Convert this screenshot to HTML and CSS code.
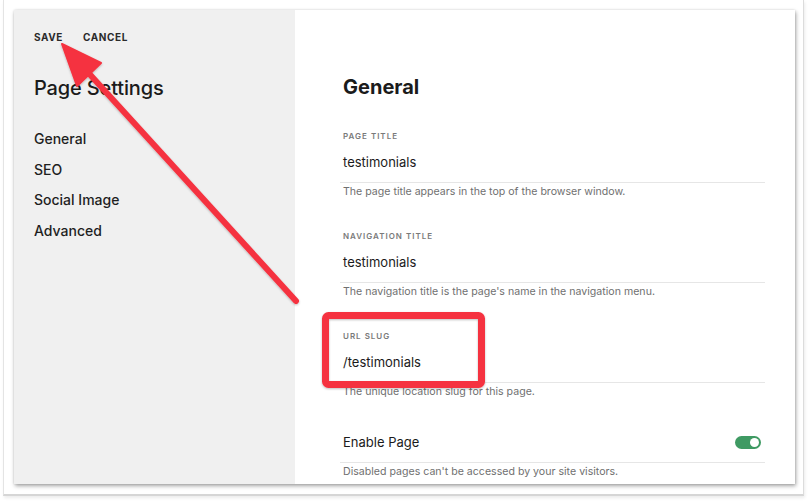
FILE: index.html
```html
<!DOCTYPE html>
<html lang="en">
<head>
<meta charset="utf-8">
<title>Page Settings</title>
<link rel="stylesheet" href="styles.css">
</head>
<body>
<div class="frame">
  <div class="dialog">
    <aside class="sidebar">
      <div class="actions">
        <span class="action">SAVE</span>
        <span class="action">CANCEL</span>
      </div>
      <h1 class="side-title">Page Settings</h1>
      <nav class="nav">
        <div class="nav-item">General</div>
        <div class="nav-item">SEO</div>
        <div class="nav-item">Social Image</div>
        <div class="nav-item">Advanced</div>
      </nav>
    </aside>
    <main class="main">
      <h2 class="main-title">General</h2>
      <div class="field">
        <div class="label">PAGE TITLE</div>
        <div class="value">testimonials</div>
        <div class="help">The page title appears in the top of the browser window.</div>
      </div>
      <div class="field">
        <div class="label">NAVIGATION TITLE</div>
        <div class="value">testimonials</div>
        <div class="help">The navigation title is the page's name in the navigation menu.</div>
      </div>
      <div class="field">
        <div class="label">URL SLUG</div>
        <div class="value">/testimonials</div>
        <div class="help">The unique location slug for this page.</div>
      </div>
      <div class="field toggle-field">
        <div class="value toggle-row">
          <span>Enable Page</span>
          <span class="toggle"><span class="knob"></span></span>
        </div>
        <div class="help">Disabled pages can't be accessed by your site visitors.</div>
      </div>
    </main>
  </div>
</div>
<svg class="annotation" width="808" height="502" viewBox="0 0 808 502" aria-hidden="true">
  <defs>
    <filter id="sh" x="-10%" y="-10%" width="120%" height="120%">
      <feDropShadow dx="0" dy="1" stdDeviation="1.2" flood-color="#000" flood-opacity="0.25"/>
    </filter>
  </defs>
  <g filter="url(#sh)" fill="#f5323f" stroke="#f5323f">
    <rect x="325.5" y="315.5" width="156" height="69" rx="3" fill="none" stroke-width="7"/>
    <line x1="84" y1="68" x2="296" y2="301" stroke-width="6" stroke-linecap="round"/>
    <polygon points="62,44 101,63 77,86" stroke-width="2" stroke-linejoin="round"/>
  </g>
</svg>
</body>
</html>
```
FILE: styles.css
```css
* { box-sizing: border-box; }
html, body { margin: 0; padding: 0; }
body {
  width: 808px;
  height: 502px;
  background: #ffffff;
  font-family: Inter, "Liberation Sans", Arial, sans-serif;
  color: #1b1b1b;
  overflow: hidden;
  position: relative;
}
.frame {
  margin-left: 3px;
  width: 801px;
  height: 496px;
  border-left: 1px solid #e4e4e4;
  border-right: 1px solid #dcdcdc;
  border-bottom: 2px solid #d6d6d6;
  padding: 10px 0 0 10px;
  box-shadow: 1px 2px 3px rgba(0,0,0,0.08);
}
.dialog {
  width: 781px;
  height: 474px;
  display: flex;
  background: #fff;
  box-shadow: 1px 2px 4px rgba(0,0,0,0.35), 0 0 2px rgba(0,0,0,0.12);
}
.sidebar {
  width: 281px;
  background: #f0f0f0;
  padding: 20px 0 0 20px;
}
.actions {
  display: flex;
  gap: 20px;
  height: 14px;
  line-height: 14px;
}
.action {
  font-size: 10px;
  font-weight: 700;
  letter-spacing: 0.6px;
  color: #2a2a2a;
}
.side-title {
  margin: 30px 0 0;
  font-size: 20px;
  line-height: 28px;
  font-weight: 500;
  color: #1b1b1b;
  letter-spacing: -0.15px;
}
.nav { margin-top: 22px; }
.nav-item {
  font-size: 14px;
  line-height: 30.5px;
  font-weight: 500;
  color: #1f1f1f;
}
.main {
  flex: 1;
  padding: 63px 30px 0 45px;
}
.main-title {
  margin: 0 0 29px 3px;
  font-size: 20px;
  line-height: 28px;
  font-weight: 700;
  color: #1b1b1b;
}
.field { margin-bottom: 31px; }
.label {
  padding-left: 3px;
  font-size: 8px;
  line-height: 12px;
  font-weight: 600;
  letter-spacing: 1px;
  color: #7a7a7a;
}
.value {
  margin-top: 10px;
  padding: 0 0 10px 3px;
  font-size: 13px;
  line-height: 20px;
  color: #1b1b1b;
  border-bottom: 1px solid #e6e6e6;
}
.help {
  padding: 1px 0 0 3px;
  font-size: 10.6px;
  line-height: 15px;
  color: #707070;
}
.toggle-field { margin-top: 33px; }
.toggle-field .value { margin-top: 0; }
.toggle-row {
  display: flex;
  align-items: center;
  justify-content: space-between;
  padding-right: 4px;
}
.toggle {
  width: 26px;
  height: 13px;
  border-radius: 7px;
  background: #3f9a63;
  position: relative;
}
.knob {
  position: absolute;
  right: 2px;
  top: 2px;
  width: 9px;
  height: 9px;
  border-radius: 50%;
  background: #fff;
}
.annotation {
  position: absolute;
  left: 0;
  top: 0;
  pointer-events: none;
}
```
